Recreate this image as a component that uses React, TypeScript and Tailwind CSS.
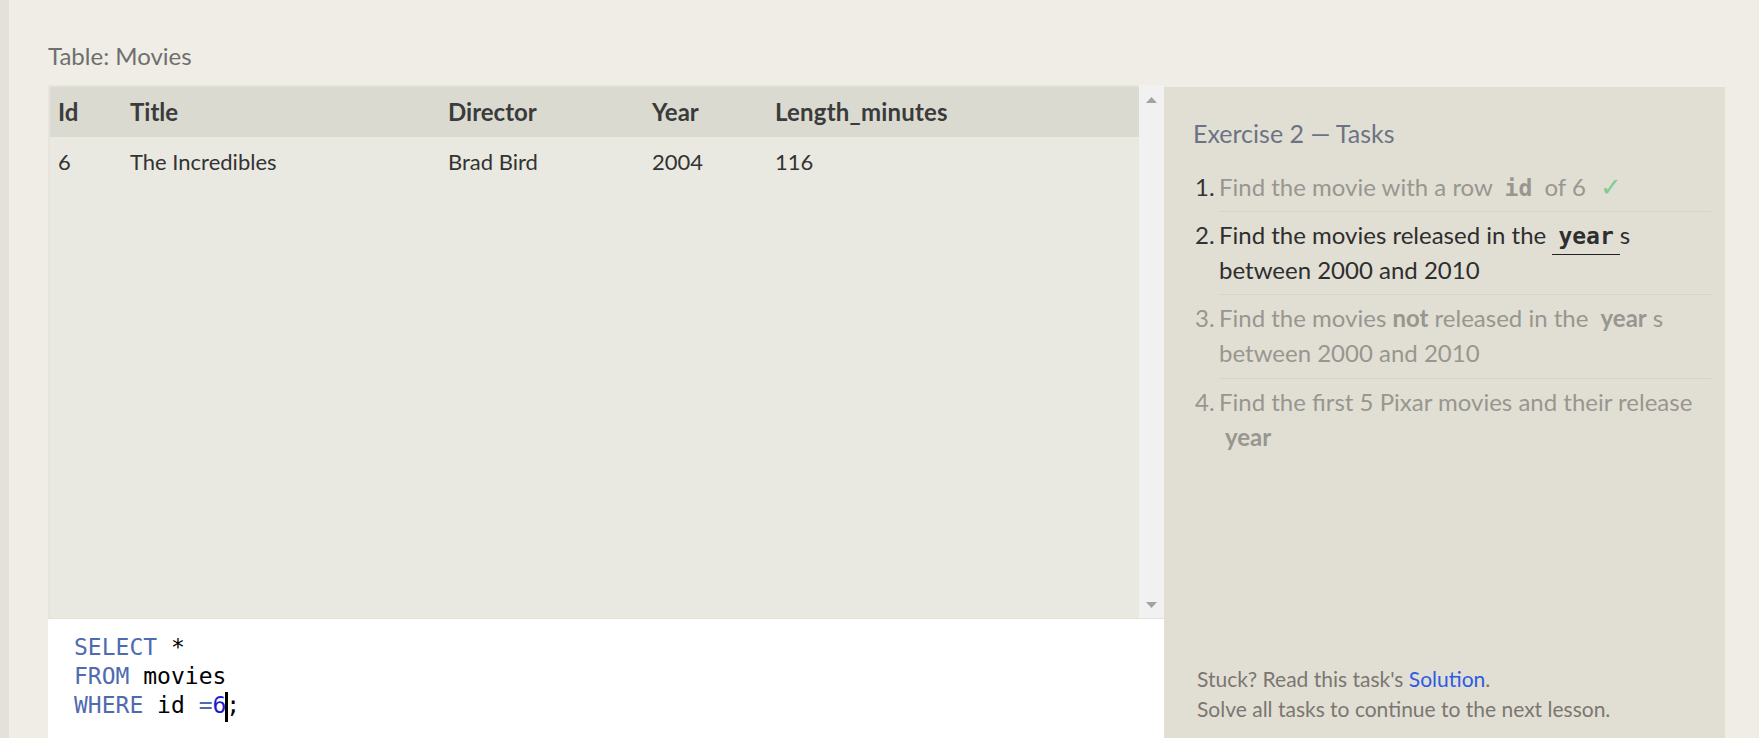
import React from "react";

const cols = "grid grid-cols-[72px_318px_204px_123px_1fr]";

function Tri({ down }: { down?: boolean }) {
  return (
    <svg width="11" height="6" viewBox="0 0 11 6" className="block">
      {down ? <polygon points="0,0 11,0 5.5,6" fill="#a3a3a3" /> : <polygon points="0,6 11,6 5.5,0" fill="#a3a3a3" />}
    </svg>
  );
}

const mono = "[font-family:'DejaVu_Sans_Mono',monospace]";

export default function App() {
  return (
    <div className="flex h-[738px] w-full overflow-hidden bg-[#f0ede6] [font-family:Lato,sans-serif]">
      <div className="w-[9px] shrink-0 bg-[#e4e1dc]" />
      <div className="flex min-w-0 flex-1 flex-col pl-[39px] pr-[34px]">
        <div className="pb-[13px] pt-[40px] text-[24px] leading-[32px] text-[#6f6f6f]">Table: Movies</div>
        <div className="flex min-h-0 flex-1">
          <div className="flex w-[1116px] shrink-0 flex-col">
            <div className="flex h-[533px] shrink-0">
              <div className="flex-1 border-l-2 border-t-2 border-[#e6e4dc] bg-[#eae9e1]">
                <div className={`${cols} h-[50px] items-center bg-[#dadad0] text-[24px] font-bold text-[#3b3b3b]`}>
                  <div className="pl-[8px]">Id</div>
                  <div className="pl-[8px]">Title</div>
                  <div className="pl-[8px]">Director</div>
                  <div className="pl-[8px]">Year</div>
                  <div className="pl-[8px] tracking-[0.2px]">Length_minutes</div>
                </div>
                <div className={`${cols} pb-[6px] pt-[8px] text-[22px] leading-[34px] text-[#333333]`}>
                  <div className="pl-[8px]">6</div>
                  <div className="pl-[8px]">The Incredibles</div>
                  <div className="pl-[8px]">Brad Bird</div>
                  <div className="pl-[8px]">2004</div>
                  <div className="pl-[8px]">116</div>
                </div>
              </div>
              <div className="flex w-[25px] shrink-0 flex-col items-center justify-between bg-[#f1f1f1] pb-[10px] pt-[12px]">
                <Tri />
                <Tri down />
              </div>
            </div>
            <div className={`flex-1 border-t border-[#e2e1da] bg-white pl-[26px] pt-[14px] text-[23px] leading-[29px] text-black ${mono}`}>
              <div>
                <span className="text-[#4f6bb0]">SELECT</span> *
              </div>
              <div>
                <span className="text-[#4f6bb0]">FROM</span> movies
              </div>
              <div>
                <span className="text-[#4f6bb0]">WHERE</span> id <span className="text-[#4f6bb0]">=</span>
                <span className="text-[#1c1cd2]">6</span>
                <span className="relative">
                  <span className="absolute left-[-1px] top-[0px] h-[30px] w-[3px] bg-black" />;
                </span>
              </div>
            </div>
          </div>
          <div className="mt-[2px] flex w-[561px] shrink-0 flex-col bg-[#e1dfd4] pb-[14px] pl-[29px] pr-[14px] pt-[30px]">
            <div className="text-[25px] leading-[32px] text-[#6c7384]">Exercise 2 — Tasks</div>
            <ol className="mt-[15px] text-[24px] leading-[35px]">
              <li className="flex">
                <span className="w-[26px] shrink-0 pl-[2px] pt-[5px] text-[#333333]">1.</span>
                <div className="flex-1 border-b border-[#d5d3c8] pb-[7px] pt-[5px] text-[#98968f]">
                  Find the movie with a row{" "}
                  <span className={`px-[6px] text-[23px] font-bold leading-none ${mono}`}>id</span>{" "}
                  of 6{" "}
                  <span className="ml-[8px] inline-block align-baseline text-[26px] font-light leading-[0] text-[#7fcc8f] [font-family:'DejaVu_Sans',sans-serif]">✓</span>
                </div>
              </li>
              <li className="flex">
                <span className="w-[26px] shrink-0 pl-[2px] pt-[5px] text-[#333333]">2.</span>
                <div className="flex-1 border-b border-[#d5d3c8] pb-[7px] pt-[5px] text-[#2e2e2e]">
                  Find the movies released in the{" "}
                  <span className={`border-b-[1.5px] border-[#222222] px-[6px] pb-[5px] text-[23px] font-bold leading-none ${mono}`}>year</span>s between 2000 and 2010
                </div>
              </li>
              <li className="flex">
                <span className="w-[26px] shrink-0 pl-[2px] pt-[5px] text-[#98968f]">3.</span>
                <div className="flex-1 border-b border-[#d5d3c8] pb-[8px] pt-[5px] text-[#98968f]">
                  Find the movies <b>not</b> released in the{" "}
                  <span className="px-[6px] font-bold">year</span>s between 2000 and 2010
                </div>
              </li>
              <li className="flex">
                <span className="w-[26px] shrink-0 pl-[2px] pt-[5px] text-[#98968f]">4.</span>
                <div className="flex-1 pb-[7px] pt-[5px] text-[#98968f]">
                  Find the first 5 Pixar movies and their release{" "}
                  <span className="px-[6px] font-bold">year</span>
                </div>
              </li>
            </ol>
            <div className="mt-auto pl-[4px] text-[21px] leading-[30px] text-[#7b7671]">
              <div>
                Stuck? Read this task's <span className="text-[#2d5be3]">Solution</span>.
              </div>
              <div>Solve all tasks to continue to the next lesson.</div>
            </div>
          </div>
        </div>
      </div>
    </div>
  );
}
